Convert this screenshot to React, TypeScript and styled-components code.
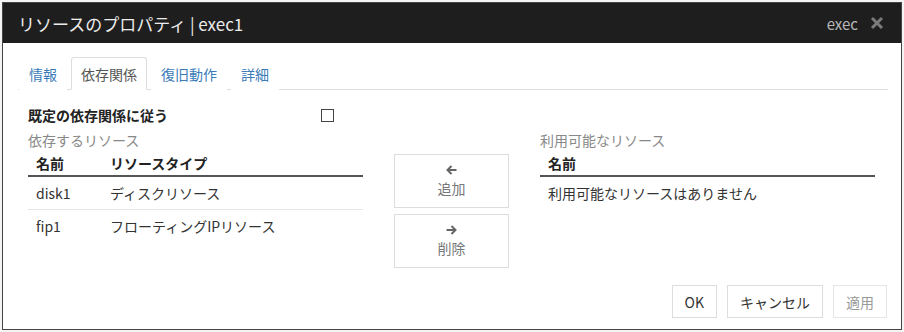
import React from 'react';
import styled, { createGlobalStyle } from 'styled-components';

const GlobalStyle = createGlobalStyle`
  body {
    margin: 0;
    padding: 2px;
    background: #f4f4f4;
    font-family: "Noto Sans CJK JP", "Noto Sans", sans-serif;
  }
`

const Window = styled.div`
  width: 898px;
  height: 326px;
  border: 1px solid #444;
  background: #fff;
  display: flex;
  flex-direction: column;
`

const TitleBar = styled.div`
  height: 40px;
  background: #1e1e1e;
  display: flex;
  align-items: center;
  padding: 0 17px 0 15px;
`

const Title = styled.div`
  flex: 1;
  color: #ececec;
  font-size: 17px;
`

const ResourceType = styled.span`
  color: #b8b8b8;
  font-size: 15px;
  margin-right: 12px;
`

const CloseIcon = styled.svg`
  width: 14px;
  height: 14px;
`

const Tabs = styled.div`
  display: flex;
  gap: 4px;
  margin: 14px 13px 0 15px;
  padding-left: 1px;
  border-bottom: 1px solid #ddd;
`

const Tab = styled.div<{ $active?: boolean }>`
  height: 31px;
  padding: 0 9px;
  display: flex;
  align-items: center;
  font-size: 14px;
  color: ${p => p.$active ? '#555' : '#3a7bb8'};
  border: 1px solid ${p => p.$active ? '#ddd' : 'transparent'};
  border-bottom-color: ${p => p.$active ? '#fff' : 'transparent'};
  margin-bottom: -1px;
  border-radius: 3px 3px 0 0;
  background: #fff;
`

const Body = styled.div`
  padding: 0 25px;
`

const OptionRow = styled.div`
  display: flex;
  align-items: center;
  height: 24px;
  margin-top: 13px;
`

const OptionLabel = styled.div`
  width: 293px;
  font-size: 14px;
  font-weight: bold;
  color: #222;
`

const CheckBox = styled.div`
  width: 11px;
  height: 11px;
  border: 1px solid #444;
  background: #fff;
`

const Columns = styled.div`
  display: grid;
  grid-template-columns: 335px 115px 335px;
  column-gap: 31px;
  margin-top: 3px;
`

const SectionLabel = styled.div`
  font-size: 14px;
  color: #888;
  height: 20px;
  line-height: 20px;
`

const Table = styled.div`
  display: flex;
  flex-direction: column;
`

const HeaderRow = styled.div`
  display: flex;
  height: 25px;
  align-items: center;
  border-bottom: 2px solid #555;
  font-size: 14px;
  font-weight: bold;
  color: #222;
`

const Row = styled.div<{ $last?: boolean }>`
  display: flex;
  height: 32px;
  align-items: center;
  border-bottom: 1px solid ${p => p.$last ? 'transparent' : '#e6e6e6'};
  font-size: 14px;
  color: #333;
`

const NameCell = styled.div<{ $wide?: boolean }>`
  width: ${p => p.$wide ? 'auto' : '74px'};
  padding-left: 8px;
`

const TypeCell = styled.div`
  flex: 1;
`

const MoveButtons = styled.div`
  display: flex;
  flex-direction: column;
  gap: 6px;
  padding-top: 24px;
`

const MoveButton = styled.div`
  height: 52px;
  border: 1px solid #ddd;
  display: flex;
  flex-direction: column;
  align-items: center;
  justify-content: center;
  gap: 2px;
  font-size: 14px;
  color: #777;
`

const Arrow = styled.svg`
  width: 13px;
  height: 12px;
`

const Footer = styled.div`
  display: flex;
  justify-content: flex-end;
  gap: 10px;
  padding: 0 14px 0 0;
  margin-top: auto;
  margin-bottom: 11px;
`

const FooterButton = styled.div<{ $disabled?: boolean }>`
  height: 31px;
  padding: 0 12px;
  border: 1px solid ${p => p.$disabled ? '#e6e6e6' : '#ddd'};
  display: flex;
  align-items: center;
  font-size: 14px;
  color: ${p => p.$disabled ? '#999' : '#333'};
  background: #fff;
`

const App: React.FC = () => {
  return (
    <>
      <GlobalStyle />
      <Window>
        <TitleBar>
          <Title>リソースのプロパティ | exec1</Title>
          <ResourceType>exec</ResourceType>
          <CloseIcon viewBox="0 0 14 14">
            <path d="M2 2 L12 12 M12 2 L2 12" stroke="#7a7a7a" strokeWidth="3" />
          </CloseIcon>
        </TitleBar>
        <Tabs>
          <Tab>情報</Tab>
          <Tab $active>依存関係</Tab>
          <Tab>復旧動作</Tab>
          <Tab>詳細</Tab>
        </Tabs>
        <Body>
          <OptionRow>
            <OptionLabel>既定の依存関係に従う</OptionLabel>
            <CheckBox />
          </OptionRow>
          <Columns>
            <Table>
              <SectionLabel>依存するリソース</SectionLabel>
              <HeaderRow>
                <NameCell>名前</NameCell>
                <TypeCell>リソースタイプ</TypeCell>
              </HeaderRow>
              <Row>
                <NameCell>disk1</NameCell>
                <TypeCell>ディスクリソース</TypeCell>
              </Row>
              <Row $last>
                <NameCell>fip1</NameCell>
                <TypeCell>フローティングIPリソース</TypeCell>
              </Row>
            </Table>
            <MoveButtons>
              <MoveButton>
                <Arrow viewBox="0 0 13 12">
                  <path d="M11.5 6 H2.5 M6.5 2 L2.5 6 L6.5 10" stroke="#666" strokeWidth="2" fill="none" />
                </Arrow>
                追加
              </MoveButton>
              <MoveButton>
                <Arrow viewBox="0 0 13 12">
                  <path d="M1.5 6 H10.5 M6.5 2 L10.5 6 L6.5 10" stroke="#666" strokeWidth="2" fill="none" />
                </Arrow>
                削除
              </MoveButton>
            </MoveButtons>
            <Table>
              <SectionLabel>利用可能なリソース</SectionLabel>
              <HeaderRow>
                <NameCell>名前</NameCell>
              </HeaderRow>
              <Row $last>
                <NameCell $wide>利用可能なリソースはありません</NameCell>
              </Row>
            </Table>
          </Columns>
        </Body>
        <Footer>
          <FooterButton>OK</FooterButton>
          <FooterButton>キャンセル</FooterButton>
          <FooterButton $disabled>適用</FooterButton>
        </Footer>
      </Window>
    </>
  )
}

export default App;
